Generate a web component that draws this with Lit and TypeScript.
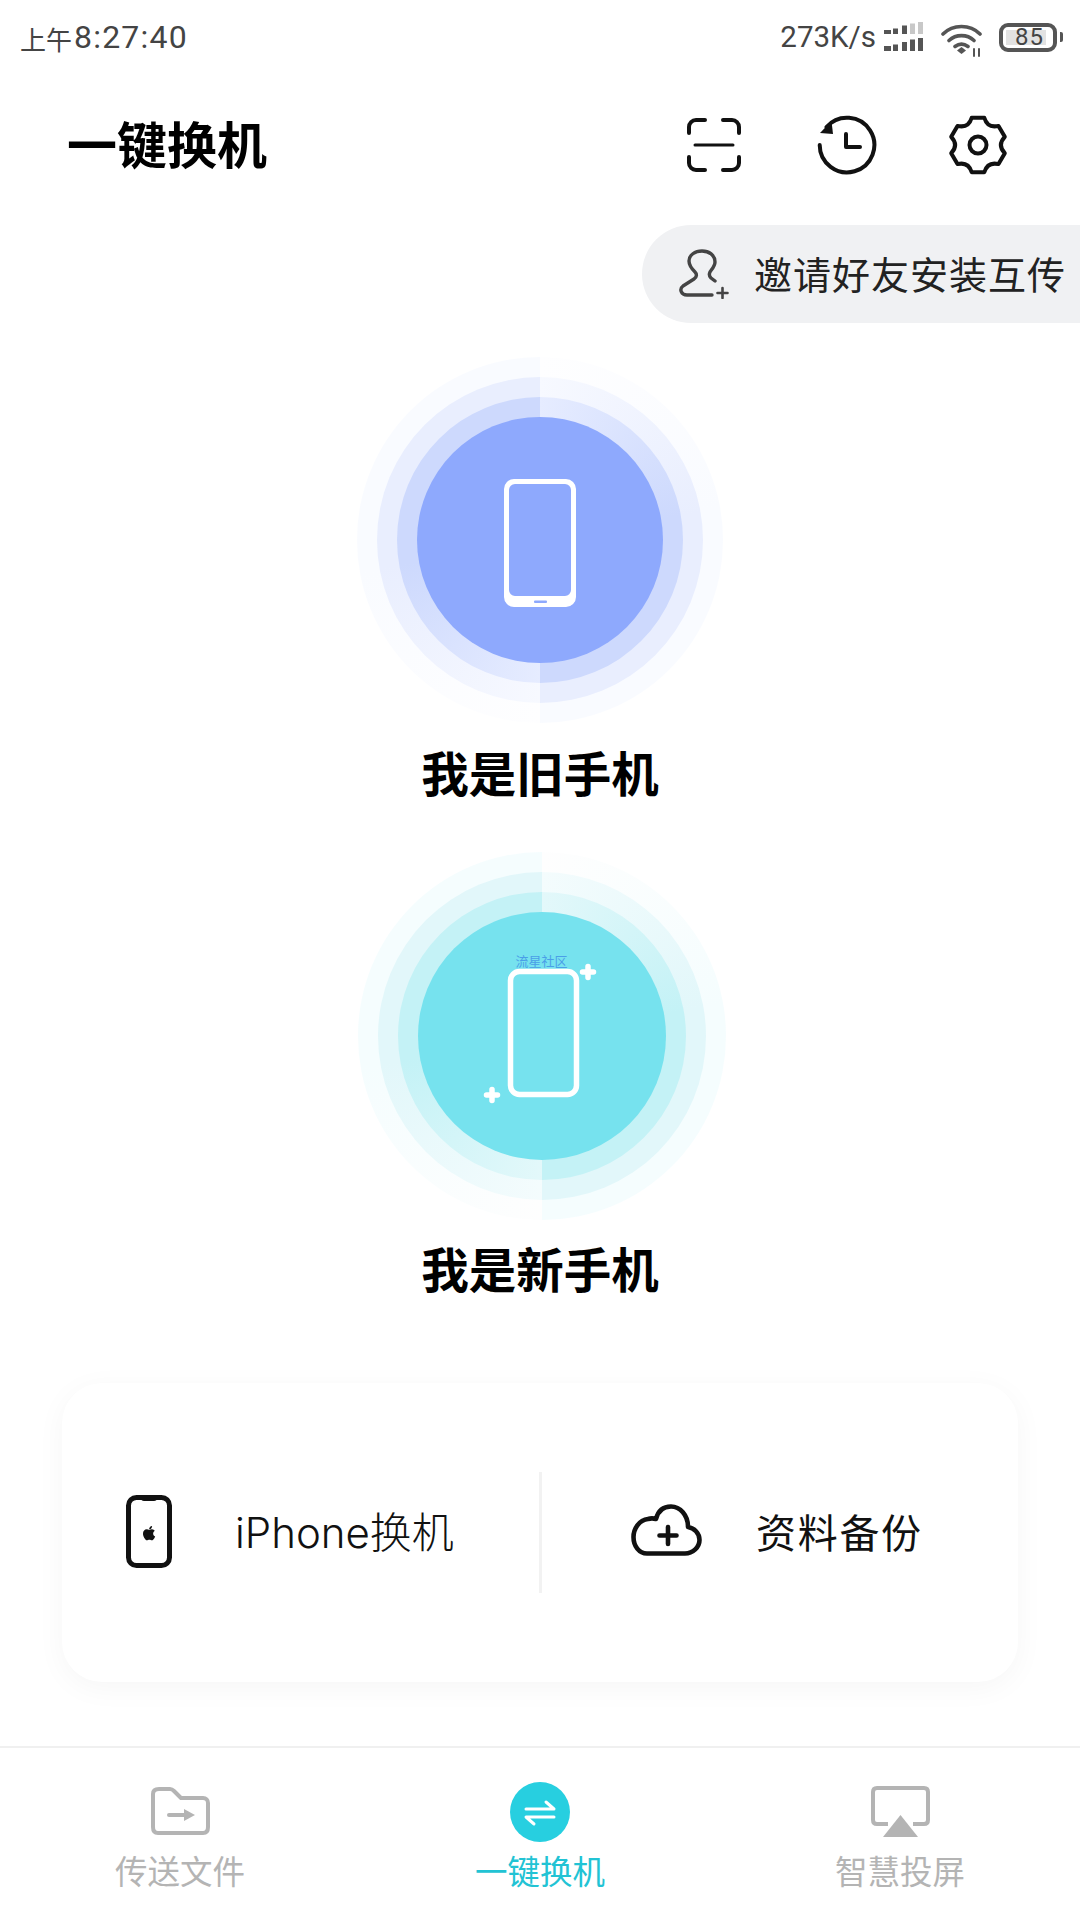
import { LitElement, html, css, svg } from "lit";
import { customElement } from "lit/decorators.js";

// six rounded lobes around the centre, valleys pulled in
function gearPath(cx: number, cy: number, outer: number, inner: number): string {
  const pt = (deg: number, r: number) => {
    const a = (deg * Math.PI) / 180;
    return `${(cx + r * Math.cos(a)).toFixed(1)} ${(cy + r * Math.sin(a)).toFixed(1)}`;
  };
  let d = "";
  for (let i = 0; i < 6; i++) {
    const mid = -90 + i * 60;
    d += `${i === 0 ? "M" : "L"}${pt(mid - 13, outer)} L${pt(mid + 13, outer)} Q${pt(mid + 30, inner)} `;
    d += `${pt(mid + 47, outer)} `;
  }
  return d + "Z";
}

const scanIcon = html`<svg width="54" height="54" viewBox="0 0 54 54" fill="none" stroke="#111" stroke-width="4" stroke-linecap="round">
  <path d="M2 15V9a7 7 0 0 1 7-7h9M36 2h9a7 7 0 0 1 7 7v6M2 39v6a7 7 0 0 0 7 7h9M36 52h9a7 7 0 0 0 7-7v-6"/>
  <path d="M8 27h38" stroke-width="3"/>
</svg>`;

const historyIcon = html`<svg width="60" height="60" viewBox="0 0 60 60" fill="none" stroke="#111" stroke-width="4" stroke-linecap="round" stroke-linejoin="round">
  <path d="M9.500 12A27.300 27.300 0 1 1 2.700 30"/>
  <path d="M3 18L14.500 6L16 19Z" fill="#111" stroke="none"/>
  <path d="M29 19V32H43"/>
</svg>`;

const gearIcon = html`<svg width="60" height="60" viewBox="0 0 60 60" fill="none" stroke="#111" stroke-width="4" stroke-linejoin="round">
  <path d=${gearPath(30, 30, 28, 19)}/>
  <circle cx="30" cy="30" r="8.500"/>
</svg>`;

const personIcon = html`<svg width="50" height="50" viewBox="0 0 50 50" fill="none" stroke="#444" stroke-width="3.400" stroke-linecap="round" stroke-linejoin="round">
  <path d="M33 46H8C2 46 0 40 4 37L15 30C18 28 18 25 16 23C12 19 10 16 10 12C10 6 16 2 23 2C30 2 36 6 36 13C36 17 33 20 31 23C30 25 30 27 32 29L36 32"/>
  <path d="M43.500 39v10M38.500 44h10" stroke-width="2.600"/>
</svg>`;

const signalIcon = html`<svg width="40" height="32" viewBox="0 0 40 32" fill="#555">
  <path d="M0 9h7v4H0zM9 7.500h5V13H9zM18 4.500h5V13h-5zM0 25h7v5H0zM9 23.500h5V30H9zM18 21h5v9h-5zM26 18.500h5V30h-5zM34 17h5v13h-5z"/>
  <path d="M26 2.500h5V13h-5zM34 1h5v12h-5z" fill="#c8c8c8"/>
</svg>`;

const wifiIcon = html`<svg width="42" height="34" viewBox="0 0 42 34" fill="none" stroke="#555" stroke-width="3.600" stroke-linecap="round">
  <path d="M2 11C12 1 29 1 39 11M8 17.500C15 11 26 11 33 17.500M14 23.500C18 20.500 23 20.500 27 23.500"/>
  <path d="M20.500 24l4.500 3.500-4.500 3.500-4.500-3.500z" fill="#555" stroke="none"/>
  <path d="M33 26v7M38 26v7" stroke-width="2"/>
</svg>`;

const iphoneIcon = html`<svg width="46" height="73" viewBox="0 0 46 73" fill="none">
  <rect x="2.500" y="2.500" width="41" height="68" rx="8" stroke="#111" stroke-width="5"/>
  <path d="M15 3h16c0 2-1 3-3 3H18c-2 0-3-1-3-3z" fill="#111"/>
  <g transform="translate(13.500 28.500) scale(.8)" fill="#111">
    <path d="M17.050 20.280c-.98.95-2.050.8-3.080.35-1.090-.46-2.090-.48-3.240 0-1.440.62-2.200.44-3.060-.35C2.790 15.250 3.510 7.590 9.050 7.310c1.350.07 2.290.74 3.080.8 1.180-.24 2.310-.93 3.570-.84 1.510.12 2.650.72 3.400 1.800-3.120 1.870-2.380 5.980.48 7.130-.57 1.500-1.310 2.990-2.540 4.090zM12.030 7.250c-.15-2.230 1.660-4.070 3.740-4.250.29 2.580-2.340 4.500-3.740 4.250z"/>
  </g>
</svg>`;

const cloudIcon = html`<svg class="cloud" width="71" height="52" viewBox="0 0 71 52" fill="none" stroke="#111" stroke-width="4.600" stroke-linecap="round" stroke-linejoin="round">
  <path d="M16 49.500H54C62 49.500 68.500 43 68.500 36C68.500 29 63 24 57 23C57 11 49 2.500 40 2.500C32 2.500 27 7 25 15C22 14 20 14 17 15C8 16 2.500 25 2.500 33C2.500 42 8 49.500 16 49.500Z"/>
  <path d="M37 23v17M28.500 31.500h17"/>
</svg>`;

const folderIcon = html`<svg width="59" height="48" viewBox="0 0 59 48" fill="none" stroke="#b4b4b4" stroke-width="4" stroke-linejoin="round">
  <path d="M8 2H19C21 2 22 3 23 4L30 11H52C55 11 57 13 57 16V40C57 44 55 46 52 46H7C4 46 2 44 2 40V7C2 4 4 2 8 2Z"/>
  <path d="M18 28H35" stroke-linecap="round"/>
  <path d="M33 22L44 28L33 34Z" fill="#b4b4b4" stroke="none"/>
</svg>`;

const swapIcon = html`<svg class="swap" width="60" height="60" viewBox="0 0 60 60">
  <circle cx="30" cy="30" r="30" fill="#27cfe0"/>
  <path d="M16 27H44L36 20M44 35H16L24 42" fill="none" stroke="#fff" stroke-width="3" stroke-linecap="round" stroke-linejoin="round"/>
</svg>`;

const castIcon = html`<svg class="cast" width="59" height="51" viewBox="0 0 59 51" fill="none">
  <path d="M17 38H6Q2 38 2 34V6Q2 2 6 2H53Q57 2 57 6V34Q57 38 53 38H42" stroke="#b4b4b4" stroke-width="4"/>
  <path d="M12 51L29.500 29L47 51Z" fill="#b4b4b4"/>
</svg>`;

const oldPhone = html`<svg class="phone" width="72" height="128" viewBox="0 0 72 128">
  <path fill="#fff" fill-rule="evenodd" d="M10 0H62A10 10 0 0 1 72 10V118A10 10 0 0 1 62 128H10A10 10 0 0 1 0 118V10A10 10 0 0 1 10 0ZM11 5A6 6 0 0 0 5 11V111A6 6 0 0 0 11 117H61A6 6 0 0 0 67 111V11A6 6 0 0 0 61 5Z"/>
  <rect x="30" y="121.500" width="13" height="2.500" rx="1" fill="#8ea9fd"/>
</svg>`;

const plus = (x: number, y: number) =>
  svg`<path d="M${x - 5.5} ${y}h11M${x} ${y - 5.5}v11" stroke="#fff" stroke-width="5.500" stroke-linecap="round"/>`;

const newPhone = html`<svg width="120" height="148" viewBox="0 0 120 148" fill="none">
  <rect x="28.500" y="9.500" width="66" height="123" rx="9" stroke="#fff" stroke-width="5.500"/>
  ${plus(106, 10)}${plus(10, 133)}
</svg>`;

@customElement("app-root")
export class AppRoot extends LitElement {
  private _tab(icon: unknown, label: string, active = false) {
    return html`
      <div class="tab ${active ? "active" : ""}">
        <div class="tab-icon">${icon}</div>
        <span>${label}</span>
      </div>
    `;
  }

  render() {
    return html`
      <div class="status">
        <div class="clock"><span class="ampm">上午</span>8:27:40</div>
        <div class="status-right">
          <span class="speed">273K/s</span>
          ${signalIcon} ${wifiIcon}
          <div class="battery-wrap">
            <div class="battery"><div class="level">85</div></div>
            <div class="nub"></div>
          </div>
        </div>
      </div>

      <div class="header">
        <div class="title">一键换机</div>
        <div class="actions">${scanIcon} ${historyIcon} ${gearIcon}</div>
      </div>

      <div class="invite">
        ${personIcon}
        <span>邀请好友安装互传</span>
      </div>

      <div class="role old">
        <div class="ring r4"><div class="ring r3"><div class="ring r2">
          <div class="core">${oldPhone}</div>
        </div></div></div>
        <div class="role-label">我是旧手机</div>
      </div>

      <div class="role new">
        <div class="ring r4"><div class="ring r3"><div class="ring r2">
          <div class="core">${newPhone}<span class="mark">流星社区</span></div>
        </div></div></div>
        <div class="role-label">我是新手机</div>
      </div>

      <div class="card">
        <div class="cell iphone">${iphoneIcon}<span>iPhone换机</span></div>
        <div class="divider"></div>
        <div class="cell backup">${cloudIcon}<span>资料备份</span></div>
      </div>

      <div class="nav">
        ${this._tab(folderIcon, "传送文件")}
        ${this._tab(swapIcon, "一键换机", true)}
        ${this._tab(castIcon, "智慧投屏")}
      </div>
    `;
  }

  static styles = css`
    :host {
      display: flex;
      flex-direction: column;
      width: 1080px;
      height: 1920px;
      overflow: hidden;
      background: #fff;
      font-family: "Noto Sans CJK SC", sans-serif;
      color: #111;
    }
    .status {
      height: 74px;
      padding: 0 17px 0 20px;
      display: flex;
      align-items: center;
      justify-content: space-between;
      color: #444;
      font-family: Roboto, "Noto Sans CJK SC", sans-serif;
    }
    .clock {
      font-size: 32px;
      letter-spacing: 1.2px;
      display: flex;
      align-items: center;
    }
    .ampm {
      font-size: 26px;
      letter-spacing: 0;
      margin-right: 2px;
      margin-top: 2px;
    }
    .status-right {
      display: flex;
      align-items: center;
    }
    .speed {
      font-size: 29.5px;
      margin-right: 8px;
    }
    .status-right svg:nth-of-type(2) {
      margin: 6px 16px 0 17px;
    }
    .battery-wrap {
      display: flex;
      align-items: center;
      gap: 3px;
    }
    .battery {
      box-sizing: border-box;
      width: 58px;
      height: 29px;
      border: 4px solid #555;
      border-radius: 9px;
      padding: 3px 7px 3px 3px;
      display: flex;
    }
    .level {
      flex: 1;
      background: #e2e2e2;
      font-size: 24px;
      line-height: 15px;
      text-align: right;
      padding-right: 2px;
      letter-spacing: 1px;
      color: #444;
    }
    .nub {
      width: 3px;
      height: 10px;
      background: #555;
      border-radius: 0 2px 2px 0;
    }

    .header {
      height: 142px;
      padding: 0 72px 0 67px;
      display: flex;
      align-items: center;
      justify-content: space-between;
    }
    .title {
      font-size: 50px;
      font-weight: 700;
      line-height: 60px;
      margin-bottom: 6px;
      color: #000;
    }
    .actions {
      display: flex;
      align-items: center;
      gap: 71px;
    }
    .actions svg:first-child {
      margin-right: 5px;
    }
    .invite {
      box-sizing: border-box;
      align-self: flex-end;
      width: 438px;
      height: 98px;
      margin-top: 9px;
      padding-left: 37px;
      display: flex;
      align-items: center;
      gap: 25px;
      background: #f0f1f3;
      border-radius: 49px 0 0 49px;
      font-size: 38px;
      letter-spacing: 1px;
      white-space: nowrap;
      color: #222;
    }
    .invite span {
      padding-bottom: 4px;
    }

    .role {
      display: flex;
      flex-direction: column;
      align-items: center;
    }
    .old {
      margin-top: 34px;
      --core: #8ea9fd;
      --s2: #cdd9fd;
      --f2: #e6ecff;
      --s3: #e9eefe;
      --f3: #f7f9ff;
      --s4: #f9fbff;
      --f4: #fefeff;
    }
    .new {
      margin-top: 50px;
      --core: #76e2ee;
      --s2: #c4f2f6;
      --f2: #e3f8fa;
      --s3: #e2f7fa;
      --f3: #f4fcfd;
      --s4: #f5fdfe;
      --f4: #fefefe;
    }
    .ring {
      padding: 20px;
      border-radius: 50%;
      display: flex;
    }
    .r2 {
      background: conic-gradient(var(--f2) 0deg, var(--s2) 80deg, var(--s2) 180deg, var(--f2) 180deg, var(--s2) 260deg, var(--s2) 360deg);
    }
    .r3 {
      background: conic-gradient(var(--f3) 0deg, var(--s3) 80deg, var(--s3) 180deg, var(--f3) 180deg, var(--s3) 260deg, var(--s3) 360deg);
    }
    .r4 {
      background: conic-gradient(var(--f4) 0deg, var(--s4) 80deg, var(--s4) 180deg, var(--f4) 180deg, var(--s4) 260deg, var(--s4) 360deg);
    }
    .new .r4 {
      margin-left: 3px;
    }
    .core {
      position: relative;
      width: 246px;
      height: 246px;
      border-radius: 50%;
      background: var(--core);
      display: flex;
      align-items: center;
      justify-content: center;
    }
    .new .core {
      width: 248px;
      height: 248px;
    }
    .phone {
      margin-top: 6px;
    }
    .mark {
      position: absolute;
      top: 41px;
      left: 0;
      right: 0;
      text-align: center;
      font-size: 13px;
      line-height: 16px;
      color: #4a9fe8;
    }
    .role-label {
      margin-top: 19px;
      font-size: 47.5px;
      font-weight: 700;
      line-height: 60px;
      color: #000;
    }
    .new .role-label {
      margin-top: 18px;
    }

    .card {
      box-sizing: border-box;
      width: 956px;
      height: 299px;
      margin: 85px 0 0 62px;
      border-radius: 40px;
      background: #fff;
      box-shadow: 0 6px 30px rgba(0, 0, 0, 0.04);
      display: flex;
      align-items: center;
    }
    .cell {
      display: flex;
      align-items: center;
      padding-bottom: 3px;
      font-size: 40px;
      line-height: 60px;
      color: #111;
      white-space: nowrap;
    }
    .iphone {
      box-sizing: border-box;
      flex: 0 0 477px;
      padding-left: 64px;
      gap: 63px;
      font-size: 42px;
      font-family: Inter, "Noto Sans CJK SC", sans-serif;
      font-weight: 300;
    }
    .iphone span {
      margin-top: 4px;
    }
    .backup {
      flex: 1;
      padding-left: 89px;
      gap: 54px;
      letter-spacing: 1.7px;
    }
    .cloud {
      margin-top: -2px;
    }
    .divider {
      width: 3px;
      height: 121px;
      background: #f2f2f2;
    }

    .nav {
      margin-top: 64px;
      flex: 1;
      border-top: 2px solid #f0f0f0;
      display: grid;
      grid-template-columns: 360px 360px 360px;
    }
    .tab {
      display: flex;
      flex-direction: column;
      align-items: center;
      font-size: 32.5px;
      line-height: 40px;
      color: #b4b4b4;
    }
    .tab.active {
      color: #22c3d4;
    }
    .tab-icon {
      height: 63px;
      margin-top: 39px;
      display: flex;
      align-items: flex-start;
    }
    .swap {
      margin-top: -5px;
    }
    .cast {
      margin-top: -1px;
    }
  `;
}

declare global {
  interface HTMLElementTagNameMap {
    "app-root": AppRoot;
  }
}
